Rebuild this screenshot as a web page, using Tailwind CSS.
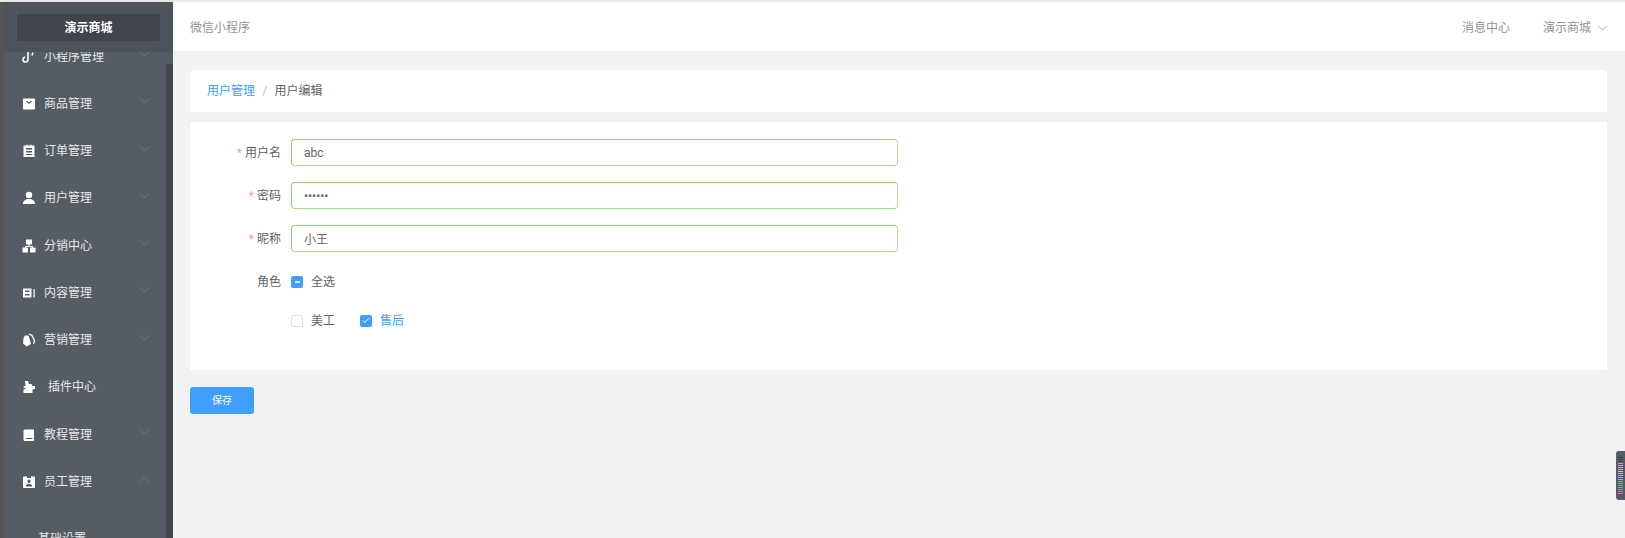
<!DOCTYPE html>
<html lang="zh">
<head>
    <meta charset="UTF-8">
    <title>用户编辑</title>
    <script src="https://cdn.jsdelivr.net/npm/@tailwindcss/browser@4"></script>
</head>
<body class="bg-[#f2f2f2] h-[538px] overflow-hidden font-['Roboto','Noto_Sans_CJK_SC',sans-serif] text-[12px]">
<div class="flex flex-col h-[538px] relative">
    <div class="h-[2px] bg-[#e8e8e8] shrink-0"></div>
    <div class="flex flex-1 min-h-0">
        <!-- sidebar -->
        <aside class="w-[173px] shrink-0 flex relative overflow-hidden">
            <div class="w-[4px] bg-[#555554]"></div>
            <div class="w-[162px] bg-[#555c64] text-white pt-[31px]">
                <div class="h-[47.25px] flex items-center pl-[18px] relative">
                    <svg class="w-[14px] h-[14px] mr-[8px]" viewBox="0 0 14 14" fill="none" stroke="#fff" stroke-width="1.6"><path d="M6 2v7.5a2.5 2.5 0 1 1-3-2.400"/><path d="M11 2.500l-1 3"/></svg>
                    <span class="text-[#e8e8e8]">小程序管理</span>
                    <svg class="absolute left-[135px] top-[18px] w-[11px] h-[6px]" viewBox="0 0 11 6" fill="none" stroke="#6f777f"><path d="M1 .5l4.500 4.500L10 .5"/></svg>
                </div>
                <div class="h-[47.25px] flex items-center pl-[18px] relative">
                    <svg class="w-[14px] h-[14px] mr-[8px]" viewBox="0 0 14 14"><path fill="#fff" fill-rule="evenodd" d="M2 1.500h10a1 1 0 0 1 1 1v9a1 1 0 0 1-1 1H2a1 1 0 0 1-1-1v-9a1 1 0 0 1 1-1zM4 4.500l3 2.600 3-2.600-.8-.7L7 5.600 4.800 3.800z"/></svg>
                    <span class="text-[#e8e8e8]">商品管理</span>
                    <svg class="absolute left-[135px] top-[18px] w-[11px] h-[6px]" viewBox="0 0 11 6" fill="none" stroke="#6f777f"><path d="M1 .5l4.500 4.500L10 .5"/></svg>
                </div>
                <div class="h-[47.25px] flex items-center pl-[18px] relative">
                    <svg class="w-[14px] h-[14px] mr-[8px]" viewBox="0 0 14 14"><path fill="#fff" fill-rule="evenodd" d="M1.500 1.500h3V.5h1v1h3V.5h1v1h3V13h-11zM4 4v1.500h6V4zM4 7v1.500h6V7zM4 10v1h6v-1z"/></svg>
                    <span class="text-[#e8e8e8]">订单管理</span>
                    <svg class="absolute left-[135px] top-[18px] w-[11px] h-[6px]" viewBox="0 0 11 6" fill="none" stroke="#6f777f"><path d="M1 .5l4.500 4.500L10 .5"/></svg>
                </div>
                <div class="h-[47.25px] flex items-center pl-[18px] relative">
                    <svg class="w-[14px] h-[14px] mr-[8px]" viewBox="0 0 14 14" fill="#fff"><circle cx="7" cy="4" r="3.200"/><path d="M1 13c0-3.500 2.500-5 6-5s6 1.500 6 5z"/></svg>
                    <span class="text-[#e8e8e8]">用户管理</span>
                    <svg class="absolute left-[135px] top-[18px] w-[11px] h-[6px]" viewBox="0 0 11 6" fill="none" stroke="#6f777f"><path d="M1 .5l4.500 4.500L10 .5"/></svg>
                </div>
                <div class="h-[47.25px] flex items-center pl-[18px] relative">
                    <svg class="w-[14px] h-[14px] mr-[8px]" viewBox="0 0 14 14" fill="#fff"><rect x="4" y=".5" width="6" height="5"/><rect x=".5" y="8.500" width="5.500" height="5"/><rect x="8" y="8.500" width="5.500" height="5"/><path d="M6.500 5h1v2H11v2h-1V8H4v1H3V7h3.500z"/></svg>
                    <span class="text-[#e8e8e8]">分销中心</span>
                    <svg class="absolute left-[135px] top-[18px] w-[11px] h-[6px]" viewBox="0 0 11 6" fill="none" stroke="#6f777f"><path d="M1 .5l4.500 4.500L10 .5"/></svg>
                </div>
                <div class="h-[47.25px] flex items-center pl-[18px] relative">
                    <svg class="w-[14px] h-[14px] mr-[8px]" viewBox="0 0 14 14"><path fill="#fff" fill-rule="evenodd" d="M1 2.500h8.500v9H1zM3 4.500V6h4.500V4.500zM3 8v1.500h4.500V8z"/><rect x="11.500" y="3" width="1.200" height="8.500" fill="#fff"/></svg>
                    <span class="text-[#e8e8e8]">内容管理</span>
                    <svg class="absolute left-[135px] top-[18px] w-[11px] h-[6px]" viewBox="0 0 11 6" fill="none" stroke="#6f777f"><path d="M1 .5l4.500 4.500L10 .5"/></svg>
                </div>
                <div class="h-[47.25px] flex items-center pl-[18px] relative">
                    <svg class="w-[14px] h-[14px] mr-[8px]" viewBox="0 0 14 14"><path fill="#fff" d="M3 2.500h3.500L9 11l-4.200 2.500L1 10.500 1.500 5z"/><path fill="none" stroke="#fff" stroke-width="1.300" d="M7 1l3 1.500 2.500 5-1 3.500"/></svg>
                    <span class="text-[#e8e8e8]">营销管理</span>
                    <svg class="absolute left-[135px] top-[18px] w-[11px] h-[6px]" viewBox="0 0 11 6" fill="none" stroke="#6f777f"><path d="M1 .5l4.500 4.500L10 .5"/></svg>
                </div>
                <div class="h-[47.25px] flex items-center pl-[18px] relative">
                    <svg class="w-[14px] h-[14px] mr-[12px]" viewBox="0 0 14 14" fill="#fff"><path d="M3 1h3l1 3h2.500l1 2H13v3l-2.500.5V13H1.500V9.500L4 8.500 1 7l2.500-1.500z"/></svg>
                    <span class="text-[#e8e8e8]">插件中心</span>
                </div>
                <div class="h-[47.25px] flex items-center pl-[18px] relative">
                    <svg class="w-[14px] h-[14px] mr-[8px]" viewBox="0 0 14 14"><path fill="#fff" fill-rule="evenodd" d="M3 1.500h9v11.500H3a1.500 1.500 0 0 1-1.500-1.500v-8.500A1.500 1.500 0 0 1 3 1.500zM3.500 10v1h7v-1z"/></svg>
                    <span class="text-[#e8e8e8]">教程管理</span>
                    <svg class="absolute left-[135px] top-[18px] w-[11px] h-[6px]" viewBox="0 0 11 6" fill="none" stroke="#6f777f"><path d="M1 .5l4.500 4.500L10 .5"/></svg>
                </div>
                <div class="h-[47.25px] flex items-center pl-[18px] relative">
                    <svg class="w-[14px] h-[14px] mr-[8px]" viewBox="0 0 14 14"><path fill="#fff" fill-rule="evenodd" d="M2 1.500h3V3h4V1.500h3a1 1 0 0 1 1 1V12a1 1 0 0 1-1 1H2a1 1 0 0 1-1-1V2.500a1 1 0 0 1 1-1zM7 4.500a1.700 1.700 0 1 0 0 3.400 1.700 1.700 0 0 0 0-3.400zM3.800 11.500h6.400c0-1.800-1.400-2.800-3.200-2.800s-3.200 1-3.200 2.800z"/></svg>
                    <span class="text-[#e8e8e8]">员工管理</span>
                    <svg class="absolute left-[135px] top-[18px] w-[11px] h-[6px]" viewBox="0 0 11 6" fill="none" stroke="#6f777f"><path d="M1 5.500L5.500 1 10 5.500"/></svg>
                </div>
                <div class="pl-[34px] pt-[24px] text-[#e8e8e8]">基础设置</div>
            </div>
            <div class="w-[7px] flex flex-col">
                <div class="h-[62px] bg-[#555c64]"></div>
                <div class="flex-1 bg-[#40444b]"></div>
            </div>
            <!-- logo bar sits over the scrolled menu -->
            <div class="absolute left-[4px] top-0 w-[169px] h-[50px] bg-[#4c535a] pt-[12px] pl-[13px]">
                <div class="w-[143px] h-[27px] rounded-[2px] bg-[#40444b] flex items-center justify-center text-white font-bold">演示商城</div>
            </div>
        </aside>

        <main class="flex-1 min-w-0 flex flex-col">
            <header class="h-[50px] shrink-0 bg-white border-b border-[#eeeeee] flex items-center justify-between pl-[17px] pr-[18px] pt-[2px] text-[#909399]">
                <span>微信小程序</span>
                <div class="flex items-center">
                    <span class="mr-[33px]">消息中心</span>
                    <span>演示商城</span>
                    <svg class="w-[9px] h-[6px] ml-[7px]" viewBox="0 0 9 6" fill="none" stroke="#a8abb2"><path d="M.5 1l4 4 4-4"/></svg>
                </div>
            </header>
            <div class="pt-[18px] pl-[17px] pr-[18px]">
                <nav class="h-[42px] bg-white rounded-t-[4px] flex items-center pl-[17px] text-[#606266]">
                    <span class="text-[#409eff]">用户管理</span>
                    <span class="mx-[7px] text-[13px] text-[#c0c4cc]">/</span>
                    <span>用户编辑</span>
                </nav>
                <form class="mt-[10px] h-[248px] bg-white pt-[17px] text-[#606266]">
                    <div class="flex items-center h-[27px] mb-[16px]">
                        <label class="w-[101px] pr-[10px] text-right"><span class="text-[#f89c9c] mr-[3px]">*</span>用户名</label>
                        <input class="w-[607px] h-[27px] px-[12px] rounded-[4px] border border-[#8fd16f] border-b-[#a5da8a] border-r-[#b7e39f] outline-none text-[12px] text-[#606266]" value="abc">
                    </div>
                    <div class="flex items-center h-[27px] mb-[16px]">
                        <label class="w-[101px] pr-[10px] text-right"><span class="text-[#f89c9c] mr-[3px]">*</span>密码</label>
                        <input type="password" class="w-[607px] h-[27px] px-[12px] rounded-[4px] border border-[#8fd16f] border-b-[#a5da8a] border-r-[#b7e39f] outline-none text-[12px] text-[#606266]" value="123456">
                    </div>
                    <div class="flex items-center h-[27px]">
                        <label class="w-[101px] pr-[10px] text-right"><span class="text-[#f89c9c] mr-[3px]">*</span>昵称</label>
                        <input class="w-[607px] h-[27px] px-[12px] rounded-[4px] border border-[#8fd16f] border-b-[#a5da8a] border-r-[#b7e39f] outline-none text-[12px] text-[#606266]" value="小王">
                    </div>
                    <div class="flex items-center h-[27px] mt-[16px]">
                        <label class="w-[101px] pr-[10px] text-right">角色</label>
                        <span class="w-[12px] h-[12px] rounded-[2px] bg-[#409eff] flex items-center justify-center"><span class="w-[5px] h-[2px] bg-white/80"></span></span>
                        <span class="ml-[8px]">全选</span>
                    </div>
                    <div class="flex items-center h-[27px] mt-[12px] pl-[101px]">
                        <span class="w-[12px] h-[12px] rounded-[2px] border border-[#dcdfe6] bg-white"></span>
                        <span class="ml-[8px]">美工</span>
                        <span class="ml-[25px] w-[12px] h-[12px] rounded-[2px] bg-[#409eff] flex items-center justify-center">
                            <svg class="w-[8px] h-[7px]" viewBox="0 0 8 7" fill="none" stroke="#fff"><path d="M1 3.500l2 2 4-4.500"/></svg>
                        </span>
                        <span class="ml-[8px] text-[#409eff]">售后</span>
                    </div>
                </form>
                <button class="mt-[17px] w-[64px] h-[27px] rounded-[3px] bg-[#409eff] text-white text-[10px] flex items-center justify-center">保存</button>
            </div>
        </main>
    </div>

    <!-- floating level meter on the window edge -->
    <div class="absolute right-0 top-[451px] w-[9px] h-[49px] rounded-l-[3px] bg-[#555c68] pl-[2px] pt-[6px] flex flex-col gap-[1px]">
        <span class="h-[1px] w-[5px] bg-[#3f434b]"></span>
        <span class="h-[1px] w-[5px] bg-[#3f434b]"></span>
        <span class="h-[1px] w-[5px] bg-[#3f434b]"></span>
        <span class="h-[1px] w-[5px] bg-[#e89a5a]"></span>
        <span class="h-[1px] w-[5px] bg-[#d9b04f]"></span>
        <span class="h-[1px] w-[5px] bg-[#d9b84f]"></span>
        <span class="h-[1px] w-[5px] bg-[#d9c04a]"></span>
        <span class="h-[1px] w-[5px] bg-[#f5d030]"></span>
        <span class="h-[1px] w-[5px] bg-[#c5c455]"></span>
        <span class="h-[1px] w-[5px] bg-[#b5c25a]"></span>
        <span class="h-[1px] w-[5px] bg-[#a5c15f]"></span>
        <span class="h-[1px] w-[5px] bg-[#95bf65]"></span>
        <span class="h-[1px] w-[5px] bg-[#85bf6a]"></span>
        <span class="h-[1px] w-[5px] bg-[#70bf80]"></span>
        <span class="h-[1px] w-[5px] bg-[#5cc090]"></span>
        <span class="h-[1px] w-[5px] bg-[#4cc0a0]"></span>
        <span class="h-[1px] w-[5px] bg-[#3cc0aa]"></span>
        <span class="h-[1px] w-[5px] bg-[#30c0b0]"></span>
        <span class="h-[1px] w-[5px] bg-[#30c0b0]"></span>
    </div>
</div>
</body>
</html>
